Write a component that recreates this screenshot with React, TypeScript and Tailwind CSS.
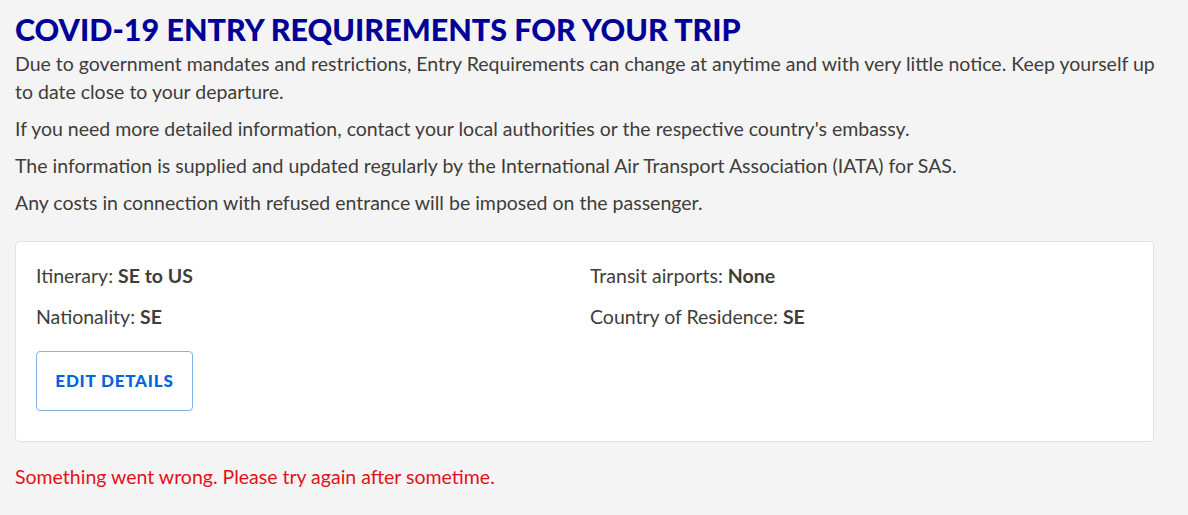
import React from "react";

export default function App() {
  return (
    <div className="min-h-[515px] w-full bg-[#f4f4f4] text-[#3f3d3a]" style={{ fontFamily: "Lato, 'Noto Sans', sans-serif" }}>
      <div className="pl-[15px] pr-[28px] pt-[11px]">
        <h1 className="m-0 text-[30.5px] font-black leading-[1.2] text-[#000099]">
          COVID-19 ENTRY REQUIREMENTS FOR YOUR TRIP
        </h1>
        <div className="mt-[2px] flex flex-col gap-[9px] text-[19.5px] leading-[28px]">
          <p>
            Due to government mandates and restrictions, Entry Requirements can change at anytime and with very little notice. Keep yourself up to date close to your departure.
          </p>
          <p>If you need more detailed information, contact your local authorities or the respective country's embassy.</p>
          <p>The information is supplied and updated regularly by the International Air Transport Association (IATA) for SAS.</p>
          <p>Any costs in connection with refused entrance will be imposed on the passenger.</p>
        </div>
        <div className="mt-[24px] w-[1139px] rounded-[4px] border border-[#e2e2e2] bg-white pb-[30px] pl-[20px] pt-[20px] text-[19.5px] leading-[28px]">
          <div className="grid grid-cols-[554px_1fr] gap-y-[13px]">
            <div>
              Itinerary: <span className="font-bold">SE to US</span>
            </div>
            <div>
              Transit airports: <span className="font-bold">None</span>
            </div>
            <div>
              Nationality: <span className="font-bold">SE</span>
            </div>
            <div>
              Country of Residence: <span className="font-bold">SE</span>
            </div>
          </div>
          <button className="mt-[20px] flex h-[60px] w-[157px] items-center justify-center rounded-[4px] border border-[#80b3ee] bg-white text-[17px] font-black tracking-[0.8px] text-[#0064dc]">
            EDIT DETAILS
          </button>
        </div>
        <p className="mt-[21px] text-[19.5px] leading-[28px] text-[#e3111b]">
          Something went wrong. Please try again after sometime.
        </p>
      </div>
    </div>
  );
}
